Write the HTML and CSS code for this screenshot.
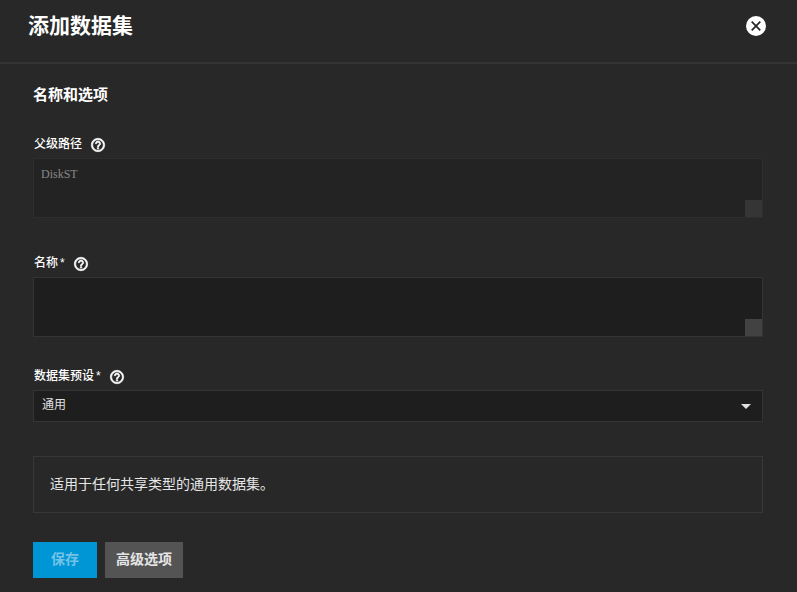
FILE: index.html
```html
<!DOCTYPE html>
<html lang="zh-CN">
<head>
<meta charset="utf-8">
<title>添加数据集</title>
<link rel="stylesheet" href="styles.css">
</head>
<body>
<svg class="defs" aria-hidden="true">
  <symbol id="help" viewBox="0 0 24 24"><path d="M11 18h2v-2h-2v2zm1-16C6.48 2 2 6.48 2 12s4.48 10 10 10 10-4.48 10-10S17.52 2 12 2zm0 18c-4.41 0-8-3.59-8-8s3.59-8 8-8 8 3.590 8 8-3.590 8-8 8zm0-14c-2.210 0-4 1.790-4 4h2c0-1.100.9-2 2-2s2 .9 2 2c0 2-3 1.750-3 5h2c0-2.250 3-2.500 3-5 0-2.210-1.790-4-4-4z"/></symbol>
</svg>
<header class="header">
  <h1 class="title">添加数据集</h1>
  <button class="close" type="button" aria-label="关闭">
    <svg viewBox="0 0 24 24"><circle cx="12" cy="12" r="10"/><path d="M7.700 7.700l8.600 8.600m0-8.600l-8.600 8.600" stroke="#282828" stroke-width="1.700"/></svg>
  </button>
</header>
<form class="form">
  <h2 class="section">名称和选项</h2>
  <div class="field">
    <div class="caption"><label for="parent">父级路径</label><svg class="help"><use href="#help"/></svg></div>
    <div class="box disabled"><textarea class="control area" id="parent" disabled>DiskST</textarea><span class="corner"></span></div>
  </div>
  <div class="field">
    <div class="caption"><label for="name">名称<span class="star">*</span></label><svg class="help"><use href="#help"/></svg></div>
    <div class="box"><textarea class="control area" id="name"></textarea><span class="corner"></span></div>
  </div>
  <div class="field preset">
    <div class="caption"><label for="preset">数据集预设<span class="star">*</span></label><svg class="help"><use href="#help"/></svg></div>
    <div class="box">
      <select class="control select" id="preset"><option>通用</option></select>
      <svg class="arrow" viewBox="0 0 10 5"><path d="M0 0h10L5 5z"/></svg>
    </div>
  </div>
  <p class="info">适用于任何共享类型的通用数据集。</p>
  <div class="actions">
    <button class="btn save" type="submit" disabled>保存</button>
    <button class="btn" type="button">高级选项</button>
  </div>
</form>
</body>
</html>
```
FILE: styles.css
```css
* { box-sizing: border-box; }

body {
  margin: 0;
  background: #282828;
  color: #fff;
  font: 12px/16px "Liberation Sans", "Noto Sans CJK SC", sans-serif;
}

.defs { position: absolute; width: 0; height: 0; }

.header {
  display: flex;
  align-items: flex-start;
  justify-content: space-between;
  height: 64px;
  padding: 10px 29px 0 28px;
  border-bottom: 2px solid #343434;
}

.title { margin: 0; font-size: 21px; line-height: 32px; font-weight: 700; }

.close {
  width: 24px;
  height: 24px;
  margin-top: 4px;
  padding: 0;
  border: 0;
  background: none;
}
.close svg { display: block; width: 24px; height: 24px; fill: #fff; }

.form { padding: 20px 34px 14px 33px; }

.section { margin: 0 0 29px; font-size: 15px; line-height: 22px; font-weight: 700; }

.field { margin-bottom: 36px; }
.field + .field { margin-bottom: 30px; }
.field.preset { margin-bottom: 34px; }

.caption {
  display: flex;
  gap: 8px;
  height: 23px;
  padding-left: 1px;
  font-weight: 500;
  line-height: 18px;
}
.star { margin-left: 2px; }
.help {
  width: 16px;
  height: 16px;
  margin-top: 2px;
  fill: #fff;
  stroke: #fff;
  stroke-width: 1px;
}

.box {
  position: relative;
  display: flex;
  background: #1e1e1e;
  border: 1px solid #343434;
}
.box.disabled { background: #232323; border-color: #2e2e2e; }

.control {
  flex: 1;
  min-width: 0;
  margin: 0;
  border: 0;
  outline: 0;
  background: none;
  color: #e0e0e0;
  font: inherit;
}
.area { height: 58px; padding: 7px; resize: none; overflow: hidden; }
.area:disabled { color: #888; font-family: "Liberation Serif", "Noto Sans CJK SC", serif; }
.select { height: 30px; padding: 0 8px 2px; appearance: none; }

.corner { position: absolute; right: 0; bottom: 0; width: 17px; height: 17px; background: #424242; }
.disabled .corner { background: #353535; }

.arrow {
  position: absolute;
  right: 11px;
  top: 13px;
  width: 10px;
  height: 5px;
  fill: #e0e0e0;
  pointer-events: none;
}

.info {
  margin: 0 0 29px;
  padding: 17px 16px 18px;
  border: 1px solid #383838;
  color: #e6e6e6;
  font-size: 14px;
  line-height: 20px;
}

.actions { display: flex; gap: 8px; }

.btn {
  height: 36px;
  padding: 0 11px 2px;
  border: 0;
  background: #545454;
  color: #e6e6e6;
  font: inherit;
  font-size: 14px;
  font-weight: 700;
}
.save { padding: 0 18px 2px; background: #0095d5; color: #73c3e7; }
```
